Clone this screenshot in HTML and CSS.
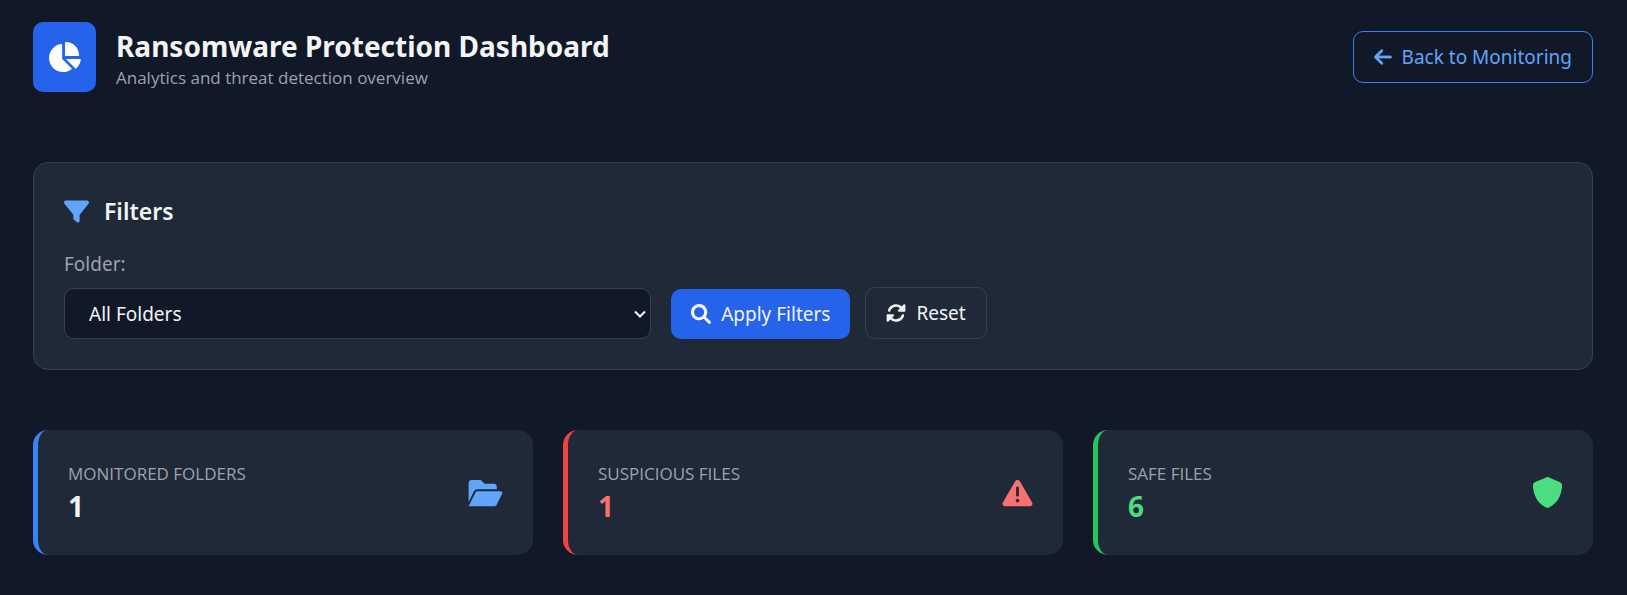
FILE: index.html
```
<!DOCTYPE html>
<html lang="en">
<head>
<meta charset="utf-8">
<meta name="viewport" content="width=device-width, initial-scale=1">
<title>Ransomware Protection Dashboard</title>
<link rel="stylesheet" href="styles.css">
</head>
<body>
<div class="page">
  <header class="header">
    <div class="brand">
      <div class="logo">
        <svg class="icon icon-pie" viewBox="16 0 560 512" aria-hidden="true"><path d="M304 240V16.6c0-9 7-16.6 16-16.6C443.7 0 544 100.3 544 224c0 9-7.6 16-16.6 16H304zM32 272C32 150.7 122.1 50.3 239 34.3c9.2-1.3 17 6.1 17 15.4V288L412.5 444.5c6.7 6.7 6.2 17.7-1.5 23.1C371.8 495.6 323.8 512 272 512C139.5 512 32 404.6 32 272zm526.4 16c9.3 0 16.6 7.8 15.4 17c-7.7 55.9-34.6 105.6-73.9 142.3c-6 5.6-15.4 5.2-21.2-.7L320 288H558.4z"/></svg>
      </div>
      <div class="heading">
        <h1 class="title">Ransomware Protection Dashboard</h1>
        <p class="subtitle">Analytics and threat detection overview</p>
      </div>
    </div>
    <a class="button button-outline" href="#">
      <svg class="icon icon-arrow" viewBox="0 0 448 512" aria-hidden="true"><path d="M447.1 256C447.1 273.7 432.8 288 416.1 288H109.3l105.4 105.4c12.5 12.5 12.5 32.75 0 45.25C208.4 444.9 200.2 448 192 448s-16.38-3.125-22.62-9.375l-160-160c-12.5-12.5-12.5-32.75 0-45.25l160-160c12.5-12.5 32.75-12.5 45.25 0s12.5 32.75 0 45.25L109.3 224H416.1C432.8 224 447.1 238.3 447.1 256z"/></svg>
      Back to Monitoring
    </a>
  </header>

  <main>
    <section class="filters">
      <h2 class="filters-title">
        <svg class="icon icon-filter" viewBox="0 0 512 512" aria-hidden="true"><path d="M3.853 54.87C10.47 40.9 24.54 32 40 32H472C487.5 32 501.5 40.9 508.1 54.87C514.8 68.84 512.7 85.37 502.1 97.33L320 320.9V448C320 460.1 313.2 471.2 302.3 476.6C291.5 482 278.5 480.9 268.8 473.6L204.8 425.6C196.7 419.6 192 410.1 192 400V320.9L9.042 97.33C-.745 85.37-2.765 68.84 3.854 54.87z"/></svg>
        Filters
      </h2>
      <form class="filters-form">
        <div class="field">
          <label class="field-label" for="folder">Folder:</label>
          <select class="select" id="folder"><option>All Folders</option></select>
        </div>
        <div class="actions">
          <button class="button button-primary" type="button">
            <svg class="icon icon-search" viewBox="0 0 512 512" aria-hidden="true"><path d="M500.3 443.7l-119.7-119.7c27.22-40.41 40.65-90.9 33.46-144.7C401.8 87.79 326.8 13.32 235.2 1.723C99.01-15.51-15.51 99.01 1.724 235.2c11.6 91.64 86.08 166.7 177.6 178.9c53.8 7.189 104.3-6.236 144.7-33.46l119.7 119.7c15.62 15.62 40.95 15.62 56.57 0C515.9 484.7 515.9 459.3 500.3 443.7zM79.1 208c0-70.58 57.42-128 128-128s128 57.42 128 128c0 70.58-57.42 128-128 128S79.1 278.6 79.1 208z"/></svg>
            Apply Filters
          </button>
          <button class="button button-ghost" type="reset">
            <svg class="icon icon-reset" viewBox="0 0 512 512" aria-hidden="true"><path d="M449.9 39.96l-48.5 48.53C362.5 53.19 311.4 32 256 32C161.5 32 78.59 92.34 49.58 182.2c-5.438 16.81 3.797 34.88 20.61 40.28c16.97 5.5 34.86-3.812 40.3-20.59C130.9 138.5 189.4 96 256 96c37.96 0 73 14.18 100.2 37.8L311.1 178C295.1 194.8 306.8 223.4 330.4 224h146.9C487.7 223.7 496 215.3 496 204.9V59.04C496 34.99 466.9 22.95 449.9 39.96zM441.8 289.6c-16.97-5.438-34.88 3.812-40.3 20.59C381.1 373.5 322.6 416 256 416c-37.96 0-73-14.18-100.2-37.8L200 334C216.9 317.2 205.2 288.6 181.6 288H34.66C24.32 288.3 16 296.7 16 307.1v145.9c0 24.04 29.07 36.08 46.07 19.07l48.5-48.53C149.5 458.8 200.6 480 255.1 480c94.45 0 177.4-60.34 206.4-150.2C467.9 313 458.6 294.1 441.8 289.6z"/></svg>
            Reset
          </button>
        </div>
      </form>
    </section>

    <section class="stats">
      <article class="stat stat-blue">
        <div class="stat-text">
          <p class="stat-label">Monitored Folders</p>
          <p class="stat-value">1</p>
        </div>
        <svg class="icon icon-folder" viewBox="0 0 576 512" aria-hidden="true"><path d="M147.8 192H480V144C480 117.5 458.5 96 432 96h-160l-64-64h-160C21.49 32 0 53.49 0 80v328.4l90.54-181.1C101.4 205.6 123.4 192 147.8 192zM543.1 224H147.8C135.7 224 124.6 230.8 119.2 241.7L0 480h447.1c12.12 0 23.2-6.852 28.62-17.69l96-192C583.2 249 567.7 224 543.1 224z"/></svg>
      </article>
      <article class="stat stat-red">
        <div class="stat-text">
          <p class="stat-label">Suspicious Files</p>
          <p class="stat-value">1</p>
        </div>
        <svg class="icon icon-warning" viewBox="0 0 512 512" aria-hidden="true"><path d="M506.3 417l-213.3-364c-16.33-28-57.54-28-73.98 0l-213.2 364C-10.59 444.9 9.849 480 42.74 480h426.6C502.1 480 522.6 445 506.3 417zM232 168c0-13.25 10.75-24 24-24S280 154.8 280 168v128c0 13.25-10.75 24-24 24S232 309.3 232 296V168zM256 416c-17.36 0-31.44-14.08-31.44-31.44c0-17.36 14.07-31.44 31.44-31.44s31.44 14.08 31.44 31.44C287.4 401.9 273.4 416 256 416z"/></svg>
      </article>
      <article class="stat stat-green">
        <div class="stat-text">
          <p class="stat-label">Safe Files</p>
          <p class="stat-value">6</p>
        </div>
        <svg class="icon icon-shield" viewBox="0 0 512 512" aria-hidden="true"><path d="M269.4 2.9C265.2 1 260.7 0 256 0s-9.2 1-13.4 2.9L54.3 82.8c-22 9.3-38.4 31-38.3 57.2c.5 99.2 41.3 280.7 213.6 363.2c16.7 8 36.1 8 52.8 0C454.7 420.7 495.5 239.2 496 140c.1-26.2-16.3-47.9-38.3-57.2L269.4 2.9z"/></svg>
      </article>
    </section>
  </main>
</div>
</body>
</html>
```
FILE: styles.css
```
* {
  box-sizing: border-box;
}

body {
  margin: 0;
  background: #111827;
  color: #f3f4f6;
  font-family: "Segoe UI", "Noto Sans", "Open Sans", sans-serif;
  font-size: 19px;
  line-height: 26px;
}

h1, h2, p {
  margin: 0;
}

.page {
  padding: 22px 34px 40px 33px;
}

.icon {
  display: block;
  flex: none;
  fill: currentColor;
}

.header {
  display: flex;
  align-items: center;
  justify-content: space-between;
  margin-bottom: 70px;
}

.brand {
  display: flex;
  align-items: center;
  gap: 20px;
}

.logo {
  padding: 20px 15px;
  border-radius: 10px;
  background: #2563eb;
  color: #fff;
}

.icon-pie { width: 33px; height: 30px; }
.icon-arrow { width: 18px; height: 20px; stroke: currentColor; stroke-width: 8; overflow: visible; }
.icon-filter { width: 25px; height: 25px; color: #60a5fa; }
.icon-search { width: 20px; height: 20px; }
.icon-reset { width: 20px; height: 20px; }
.icon-folder { width: 35px; height: 30px; }
.icon-warning { width: 31px; height: 30px; }
.icon-shield { width: 31px; height: 31px; }

.heading {
  padding-top: 4px;
}

.title {
  font-size: 28px;
  font-weight: 700;
  line-height: 38px;
}

.subtitle {
  color: #9ca3af;
  font-family: "Segoe UI", "Open Sans", sans-serif;
  font-size: 17px;
  line-height: 26px;
}

.button {
  display: flex;
  align-items: center;
  gap: 10px;
  padding: 12px 20px;
  border: 0;
  border-radius: 10px;
  background: none;
  color: #f3f4f6;
  font: inherit;
  text-decoration: none;
}

.button-outline {
  border: 1px solid #3b82f6;
  color: #60a5fa;
}

.button-primary {
  background: #2563eb;
}

.button-ghost {
  border: 1px solid #374151;
}

.filters {
  margin-bottom: 60px;
  padding: 30px;
  border: 1px solid #374151;
  border-radius: 15px;
  background: #1f2937;
}

.filters-title {
  display: flex;
  align-items: center;
  gap: 15px;
  margin-bottom: 22px;
  font-size: 23px;
  font-weight: 600;
  line-height: 36px;
}

.filters-form {
  display: flex;
  align-items: flex-end;
  gap: 20px;
}

.field {
  width: 39.2%;
}

.field-label {
  display: block;
  margin-bottom: 11px;
  color: #9ca3af;
}

.select {
  display: block;
  width: 100%;
  height: 51px;
  padding: 0 24px;
  border: 1px solid #374151;
  border-radius: 10px;
  appearance: none;
  background: #111827 url("data:image/svg+xml,%3Csvg xmlns='http://www.w3.org/2000/svg' width='12' height='8' viewBox='0 0 12 8'%3E%3Cpath d='M1 1.5l5 5 5-5' fill='none' stroke='%23f3f4f6' stroke-width='2'/%3E%3C/svg%3E") no-repeat right 4px center;
  color: #f3f4f6;
  font: inherit;
}

.actions {
  display: flex;
  align-items: flex-end;
  gap: 15px;
}

.stats {
  display: grid;
  grid-template-columns: repeat(3, 1fr);
  gap: 30px;
}

.stat {
  display: flex;
  align-items: center;
  justify-content: space-between;
  padding: 29px 30px;
  border-left: 5px solid;
  border-radius: 15px;
  background: #1f2937;
}

.stat-text {
  padding-top: 2px;
}

.stat-label {
  color: #9ca3af;
  font-family: "Segoe UI", "Open Sans", sans-serif;
  font-size: 17px;
  line-height: 26px;
  text-transform: uppercase;
}

.stat-value {
  font-size: 28px;
  font-weight: 700;
  line-height: 39px;
}

.stat-blue { border-color: #3b82f6; }
.stat-blue .icon { color: #60a5fa; }
.stat-red { border-color: #ef4444; }
.stat-red .icon, .stat-red .stat-value { color: #f87171; }
.stat-green { border-color: #22c55e; }
.stat-green .icon, .stat-green .stat-value { color: #4ade80; }
```
